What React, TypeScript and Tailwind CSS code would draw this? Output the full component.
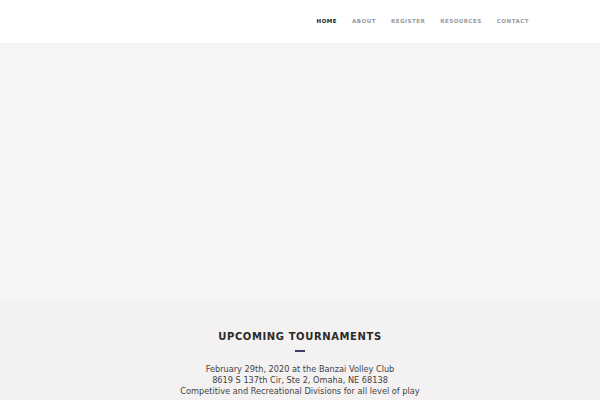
const font = { fontFamily: '"DejaVu Sans", sans-serif' };

const links = ['HOME', 'ABOUT', 'REGISTER', 'RESOURCES', 'CONTACT'];

export default function App() {
  return (
    <div className="min-h-screen bg-white" style={font}>
      <header className="h-[43px] bg-white flex items-center justify-end pr-[71px]">
        <nav className="flex gap-[15px] items-center">
          {links.map((l, i) => (
            <a
              key={l}
              href="#"
              className={`text-[5.5px] font-bold tracking-[0.5px] ${i === 0 ? 'text-[#222]' : 'text-[#999]'}`}
            >
              {l}
            </a>
          ))}
        </nav>
      </header>
      <div className="h-[259px] bg-[#f5f5f5]" />
      <section className="bg-[#f3f1f1] pt-[27px] pb-10 text-center">
        <h2 className="text-[10px] font-bold tracking-[0.6px] text-[#2a2a2a] leading-[15px]">
          UPCOMING TOURNAMENTS
        </h2>
        <div className="mx-auto mt-[6px] mb-[12px] w-[10px] h-[1.5px] bg-[#3d3d6b]" />
        <div className="text-[8.2px] leading-[11px] text-[#444]">
          <p>February 29th, 2020 at the Banzai Volley Club</p>
          <p>8619 S 137th Cir, Ste 2, Omaha, NE 68138</p>
          <p>Competitive and Recreational Divisions for all level of play</p>
        </div>
      </section>
    </div>
  );
}
